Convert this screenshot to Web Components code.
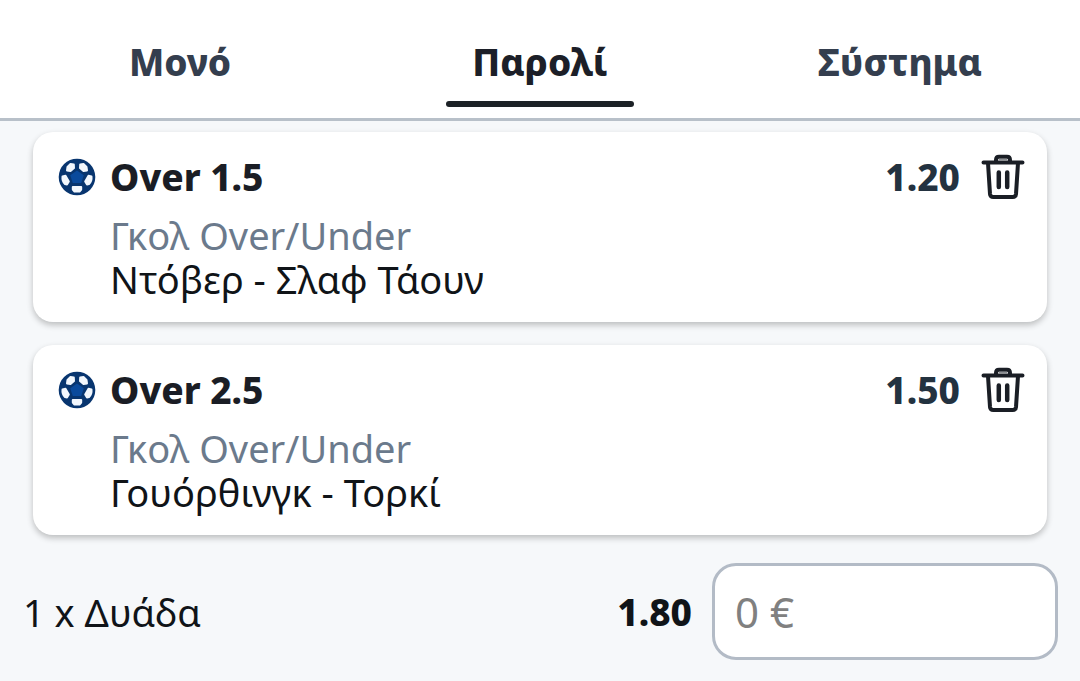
<!DOCTYPE html>
<html lang="el">
<head>
<meta charset="utf-8">
<meta name="viewport" content="width=device-width, initial-scale=1">
<title>Δελτίο</title>
<style>
  html { background: #f6f8fa; }
  body { margin: 0; font-family: "Noto Sans", "Open Sans", sans-serif; color: #101418; }
</style>
</head>
<body>
<bet-slip></bet-slip>
<script>
const define = (name, html) => {
  const template = document.createElement('template');
  template.innerHTML = html;
  customElements.define(name, class extends HTMLElement {
    constructor() {
      super();
      this.attachShadow({ mode: 'open' }).append(template.content.cloneNode(true));
    }
  });
};

define('ball-icon', `
<style>
  :host { display: block; width: 38px; height: 38px; }
  svg { display: block; width: 100%; height: 100%; }
</style>
<svg viewBox="0 0 38 38" aria-hidden="true">
  <circle cx="19" cy="19" r="18.3" fill="#08356f"/>
  <path d="M19 12.5 25.8 17.2 23.2 25H14.8L12.2 17.2Z" fill="#0a4a9c"/>
  <g fill="#f2f7fd" stroke="#f2f7fd" stroke-width="2" stroke-linejoin="round">
    <path d="M9.5 9 12.5 6 15.8 6.500 16 10 12.5 13 9 12.5Z"/>
    <path d="M28.5 9 25.500 6 22.200 6.500 22 10 25.5 13 29 12.5Z"/>
    <path d="M4.5 18.5 7.500 17.8 10.8 23.500 9 26.500 7 26Q4 23 4.5 18.5Z"/>
    <path d="M33.5 18.5 30.500 17.8 27.200 23.500 29 26.500 31 26Q34 23 33.5 18.5Z"/>
    <path d="M14.8 29H23.2L23.2 31.5 21.5 33.500H16.5L14.8 31.5Z"/>
  </g>
</svg>`);

define('delete-button', `
<style>
  :host { display: block; }
  button { display: block; margin: 0; padding: 0; border: 0; background: none; color: #1a1e25; cursor: pointer; }
  svg { display: block; width: 44px; height: 46px; }
</style>
<button type="button" aria-label="Διαγραφή">
  <svg viewBox="0 0 44 46" fill="none" stroke="currentColor" stroke-width="4" stroke-linecap="round" stroke-linejoin="round" aria-hidden="true">
    <path d="M2.5 8.500H41.5M15 8V6Q15 2.800 18 2.800H26Q29 2.800 29 6V8M7 9 9 40Q9.3 43 12.3 43H31.7Q34.7 43 35 40L37 9"/>
    <path d="M17.8 18.5V33M26.2 18.5V33" stroke-width="4.500"/>
    <path d="M18.500 5.600H25.500" stroke="#8b8e92" stroke-width="1.800"/>
  </svg>
</button>`);

define('slip-tab', `
<style>
  :host { display: flex; flex: 1; justify-content: center; }
  button { display: flex; flex-direction: column; align-items: center; justify-content: space-between; box-sizing: border-box;
    min-width: 188px; height: 118px; margin: 0; padding: 36px 0 11px; border: 0; background: none;
    font: 800 37px/52px "Noto Sans", "Open Sans", sans-serif; color: #343e4e; cursor: pointer; }
  i { width: 188px; height: 6px; border-radius: 3px; }
  :host([selected]) button { color: #1c1f28; }
  :host([selected]) i { background: #1c2126; }
</style>
<button type="button"><slot></slot><i></i></button>`);

define('bet-card', `
<style>
  :host { display: grid; grid-template-columns: 38px 1fr auto 44px; column-gap: 14px; padding: 19px 22px 21px 25px;
    border-radius: 20px; background: #fff; box-shadow: 0 3px 6px rgba(0, 0, 0, .24); }
  ball-icon, delete-button { align-self: center; }
  h2, p { margin: 0; }
  h2, .odds { font-size: 37px; line-height: 52px; font-weight: 800; }
  h2 { color: #1a1d25; }
  .odds { color: #233240; margin-right: 7px; }
  .info { grid-column: 2 / -1; padding-top: 10px; font-size: 38px; line-height: 44px; }
  .market { color: #6b7a8c; }
</style>
<ball-icon></ball-icon>
<h2><slot name="pick"></slot></h2>
<span class="odds"><slot name="odds"></slot></span>
<delete-button></delete-button>
<div class="info">
  <p class="market"><slot name="market"></slot></p>
  <p><slot name="match"></slot></p>
</div>`);

define('stake-row', `
<style>
  :host { display: flex; align-items: center; padding: 0 22px 0 23px; font-size: 38px; line-height: 52px; }
  label { flex: 1; }
  strong { margin-right: 20px; font-size: 37px; font-weight: 800; }
  input { box-sizing: border-box; width: 346px; height: 97px; margin: 0; padding: 0 20px; border: 3px solid #b3bbc6;
    border-radius: 24px; background: #fff; font: 400 42px/52px "Noto Sans", "Open Sans", sans-serif; color: #101418; }
  input::placeholder { color: #808080; opacity: 1; }
</style>
<label for="stake"><slot></slot></label>
<strong><slot name="total"></slot></strong>
<input id="stake" type="text" inputmode="decimal" placeholder="0 €">`);

define('bet-slip', `
<style>
  :host { display: block; }
  nav { display: flex; background: #fff; border-bottom: 3px solid #b8c0c9; }
  main { display: flex; flex-direction: column; gap: 23px; padding: 11px 33px 28px; }
</style>
<nav>
  <slip-tab>Μονό</slip-tab>
  <slip-tab selected>Παρολί</slip-tab>
  <slip-tab>Σύστημα</slip-tab>
</nav>
<main>
  <bet-card>
    <span slot="pick">Over 1.5</span><span slot="odds">1.20</span>
    <span slot="market">Γκολ Over/Under</span><span slot="match">Ντόβερ - Σλαφ Τάουν</span>
  </bet-card>
  <bet-card>
    <span slot="pick">Over 2.5</span><span slot="odds">1.50</span>
    <span slot="market">Γκολ Over/Under</span><span slot="match">Γουόρθινγκ - Τορκί</span>
  </bet-card>
</main>
<stake-row>1 x Δυάδα<span slot="total">1.80</span></stake-row>`);
</script>
</body>
</html>
